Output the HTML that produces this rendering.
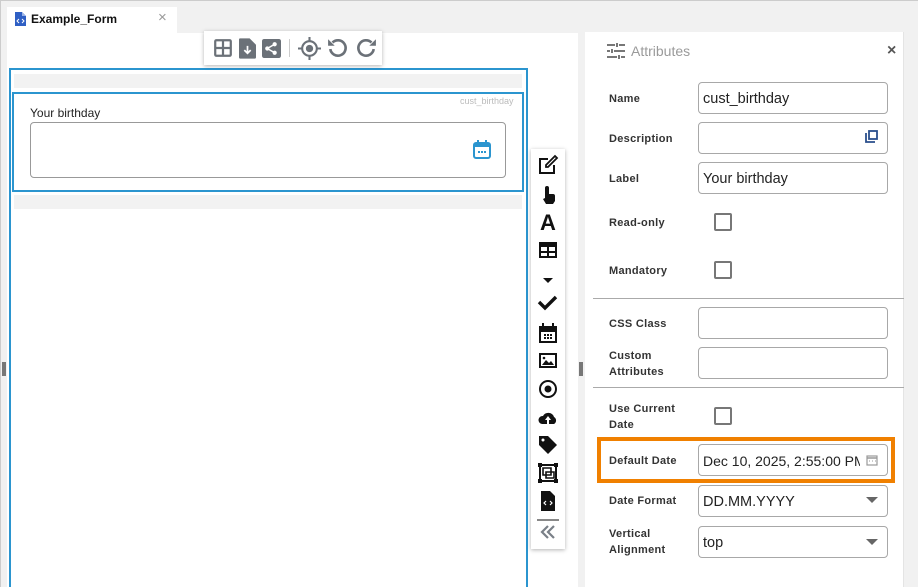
<!DOCTYPE html>
<html style="overflow:hidden;width:918px;height:587px"><head><meta charset="utf-8"><style>
*{box-sizing:border-box;margin:0;padding:0}
body{width:918px;height:587px;overflow:hidden;background:#f1f1f1;font-family:"Liberation Sans",sans-serif;position:relative;color:#222}
.a{position:absolute}
.inp{position:absolute;border:1px solid #a8a8a8;border-radius:4px;background:#fff;left:698px;width:190px;height:32px;font-size:14.5px;padding:8px 0 0 4px;color:#222;white-space:nowrap;overflow:hidden}
.lbl{position:absolute;left:609px;font-size:11px;font-weight:bold;color:#333;line-height:16px;letter-spacing:.3px}
.cb{position:absolute;left:714px;width:18px;height:18px;border:2px solid #777;border-radius:2px}
.tb svg{display:block}
</style></head><body>
<div class="a" style="left:0;top:0;width:918px;height:1px;background:#ccc"></div>
<div class="a" style="left:0;top:0;width:1px;height:587px;background:#ccc"></div>
<!-- tab -->
<div class="a" style="left:7px;top:7px;width:170px;height:27px;background:#fff"></div>
<svg class="a" style="left:15px;top:12px" width="11" height="14" viewBox="0 0 11 14"><path d="M0 0h7l4 4v10H0z" fill="#2f5fc4"/><path d="M7 0v4h4" fill="#9bb3e6"/><path d="M4 7l-2 2 2 2M7 7l2 2-2 2" stroke="#fff" stroke-width="1" fill="none"/></svg>
<div class="a" style="left:31px;top:12px;font-size:12px;font-weight:bold;color:#111">Example_Form</div>
<div class="a" style="left:158px;top:9px;font-size:15px;color:#999">×</div>
<!-- left panel -->
<div class="a" style="left:7px;top:33px;width:571px;height:554px;background:#fff"></div>
<div class="a" style="left:9px;top:68px;width:519px;height:530px;border:2px solid #2b95cf"></div>
<div class="a" style="left:14px;top:74px;width:508px;height:14px;background:#f2f2f2"></div>
<div class="a" style="left:12px;top:92px;width:512px;height:100px;border:2px solid #2b95cf"></div>
<div class="a" style="left:460px;top:96px;font-size:9px;color:#bbb">cust_birthday</div>
<div class="a" style="left:30px;top:106px;font-size:12px;color:#222">Your birthday</div>
<div class="a" style="left:30px;top:122px;width:476px;height:56px;border:1px solid #999;border-radius:4px"></div>
<svg class="a" style="left:473px;top:140px" width="18" height="19" viewBox="0 0 18 19"><rect x="1" y="3" width="16" height="15" rx="2" fill="none" stroke="#2b95cf" stroke-width="2"/><rect x="1" y="3" width="16" height="4" fill="#2b95cf"/><rect x="4" y="0" width="2" height="4" fill="#2b95cf"/><rect x="12" y="0" width="2" height="4" fill="#2b95cf"/><rect x="5" y="11" width="2" height="2" fill="#2b95cf"/><rect x="8" y="11" width="2" height="2" fill="#2b95cf"/><rect x="11" y="11" width="2" height="2" fill="#2b95cf"/></svg>
<div class="a" style="left:14px;top:195px;width:508px;height:14px;background:#f2f2f2"></div>
<div class="a" style="left:2px;top:362px;width:4px;height:14px;border-left:2px solid #777;border-right:2px solid #777"></div>
<div class="a" style="left:579px;top:362px;width:4px;height:14px;border-left:2px solid #777;border-right:2px solid #777"></div>
<!-- top toolbar -->
<div class="a tb" style="left:204px;top:31px;width:178px;height:34px;background:#fff;box-shadow:0 1px 4px rgba(0,0,0,.3);display:flex;align-items:center;padding-left:9px;gap:6px">
<svg width="20" height="20" viewBox="0 0 18 18"><rect x="1" y="1" width="16" height="16" rx="2" fill="#6b7178"/><path d="M3 3h5v5H3zM10 3h5v5h-5zM3 10h5v5H3zM10 10h5v5h-5z" fill="#fff"/></svg>
<svg width="17" height="21" viewBox="0 0 16 19"><path d="M0 1a1 1 0 0 1 1-1h9l6 6v12a1 1 0 0 1-1 1H1a1 1 0 0 1-1-1z" fill="#6b7178"/><path d="M8 7v7M5 11l3 3 3-3" stroke="#fff" stroke-width="1.6" fill="none"/></svg>
<svg width="19" height="19" viewBox="0 0 18 18"><rect x="0" y="0" width="18" height="18" rx="2" fill="#6b7178"/><circle cx="12" cy="5" r="2" fill="#fff"/><circle cx="5" cy="9" r="2" fill="#fff"/><circle cx="12" cy="13" r="2" fill="#fff"/><path d="M12 5L5 9l7 4" stroke="#fff" stroke-width="1.4" fill="none"/></svg>
<div style="width:1px;height:18px;background:#ccc;margin:0 2px"></div>
<svg width="23" height="23" viewBox="0 0 22 22"><circle cx="11" cy="11" r="7" fill="none" stroke="#6b7178" stroke-width="2"/><circle cx="11" cy="11" r="3.5" fill="#6b7178"/><path d="M11 0v4M11 18v4M0 11h4M18 11h4" stroke="#6b7178" stroke-width="2"/></svg>
<svg width="22" height="22" viewBox="0 0 20 20"><path d="M5 5a7 7 0 1 1-2 6" fill="none" stroke="#6b7178" stroke-width="2.4"/><path d="M1 2v6h6z" fill="#6b7178"/></svg>
<svg width="22" height="22" viewBox="0 0 20 20"><path d="M15 5a7 7 0 1 0 2 6" fill="none" stroke="#6b7178" stroke-width="2.4"/><path d="M19 2v6h-6z" fill="#6b7178"/></svg>
</div>
<!-- vertical toolbar -->
<div class="a" style="left:531px;top:149px;width:34px;height:400px;background:#fff;box-shadow:0 1px 4px rgba(0,0,0,.3)"></div>
<svg class="a" style="left:537px;top:154px" width="22" height="390" viewBox="0 0 22 390">
<g fill="#111">
<path d="M2 4h9v2H4v12h12v-7h2v9H2z"/><path d="M9 11l9-9 2 2-9 9H9z" fill="none" stroke="#111" stroke-width="1.8"/>
<path d="M8 34a2 2 0 0 1 4 0v6h4a2 2 0 0 1 2 2v5l-2 3H9l-3-5 2-1z"/>
<text x="11" y="76" font-size="22" font-weight="bold" text-anchor="middle" font-family="Liberation Sans">A</text>
<path d="M2 88h18v16H2z"/><path d="M4 93h6v4H4zM12 93h6v4h-6zM4 99h6v3H4zM12 99h6v3h-6z" fill="#fff"/>
<path d="M6 124h10l-5 5z"/>
<path d="M2 148l6 6 11-11" fill="none" stroke="#111" stroke-width="3.4"/>
<path d="M2 172h18v17H2z"/><path d="M4 178h14v9H4z" fill="#fff"/><rect x="5" y="169" width="2" height="4"/><rect x="15" y="169" width="2" height="4"/><path d="M7 180h2v2H7zM10 180h2v2h-2zM13 180h2v2h-2zM7 183h2v2H7zM10 183h2v2h-2zM13 183h2v2h-2z"/>
<path d="M2 199h18v15H2z"/><path d="M4 201h14v11H4z" fill="#fff"/><path d="M5 211l4-5 3 3 2-2 3 4z"/><circle cx="7" cy="204" r="1.3"/>
<circle cx="11" cy="235" r="8" fill="none" stroke="#111" stroke-width="2"/><circle cx="11" cy="235" r="3.5"/>
<path d="M5 270a4 4 0 0 1 1-8 6 6 0 0 1 11 1 4 4 0 0 1 0 7z"/><path d="M11 262l-3 4h2v4h2v-4h2z" fill="#fff"/>
<path d="M2 282h9l9 9-9 9-9-9z"/><circle cx="6" cy="286" r="1.5" fill="#fff"/>
<path d="M3 311h16v16H3z" fill="none" stroke="#111" stroke-width="2"/><path d="M6 314h8v7H6z" fill="none" stroke="#111" stroke-width="1.6"/><path d="M9 318h8v6H9z" fill="none" stroke="#111" stroke-width="1.6"/><path d="M1 309h4v4H1zM17 309h4v4h-4zM1 325h4v4H1zM17 325h4v4h-4z"/>
<path d="M4 337h9l5 5v15H4z"/><path d="M9 347l-2 2 2 2M13 347l2 2-2 2" stroke="#fff" stroke-width="1.2" fill="none"/>
<rect x="0" y="365" width="22" height="2" fill="#888"/>
<path d="M11 372l-6 6 6 6M17 372l-6 6 6 6" stroke="#7a8088" stroke-width="2.2" fill="none"/>
</g></svg>
<!-- right panel -->
<div class="a" style="left:585px;top:32px;width:319px;height:555px;background:#fff"></div>
<div class="a" style="left:903px;top:32px;width:1px;height:555px;background:#e4e4e4"></div>
<svg class="a" style="left:607px;top:43px" width="18" height="16" viewBox="0 0 18 16"><path d="M0 2h8M12 2h6M0 8h3M7 8h11M0 14h10M14 14h4M10 0v4M5 6v4M12 12v4" stroke="#777" stroke-width="2"/></svg>
<div class="a" style="left:631px;top:43px;font-size:14px;color:#9a9a9a">Attributes</div>
<div class="a" style="left:887px;top:42px;font-size:16px;font-weight:bold;color:#555">×</div>
<div class="lbl" style="top:91px">Name</div><div class="inp" style="top:82px">cust_birthday</div>
<div class="lbl" style="top:131px">Description</div><div class="inp" style="top:122px"></div>
<svg class="a" style="left:865px;top:130px" width="13" height="13" viewBox="0 0 13 13"><path d="M1 3v9h9" fill="none" stroke="#2a4f8c" stroke-width="1.8"/><rect x="4" y="1" width="8" height="8" fill="none" stroke="#2a4f8c" stroke-width="1.8"/></svg>
<div class="lbl" style="top:171px">Label</div><div class="inp" style="top:162px">Your birthday</div>
<div class="lbl" style="top:215px">Read-only</div><div class="cb" style="top:213px"></div>
<div class="lbl" style="top:263px">Mandatory</div><div class="cb" style="top:261px"></div>
<div class="a" style="left:593px;top:298px;width:311px;height:1px;background:#aaa"></div>
<div class="lbl" style="top:316px">CSS Class</div><div class="inp" style="top:307px"></div>
<div class="lbl" style="top:348px">Custom<br>Attributes</div><div class="inp" style="top:347px"></div>
<div class="a" style="left:593px;top:387px;width:311px;height:1px;background:#aaa"></div>
<div class="lbl" style="top:401px">Use Current<br>Date</div><div class="cb" style="top:407px"></div>
<div class="a" style="left:597px;top:437px;width:298px;height:46px;border:4px solid #f08000"></div>
<div class="lbl" style="top:453px">Default Date</div>
<div class="inp" style="top:444px;font-size:14px">Dec 10, 2025, 2:55:00 PM</div>
<div class="a" style="left:860px;top:445px;width:27px;height:30px;background:#fff;border-radius:0 4px 4px 0"></div>
<svg class="a" style="left:866px;top:454px" width="12" height="12" viewBox="0 0 12 12"><rect x="1" y="2" width="10" height="9" fill="none" stroke="#999" stroke-width="1.2"/><path d="M1 4h10" stroke="#999" stroke-width="1.5"/><path d="M3 7h1M6 7h1M9 7h1" stroke="#999"/></svg>
<div class="lbl" style="top:493px">Date Format</div><div class="inp" style="top:485px">DD.MM.YYYY</div>
<svg class="a" style="left:866px;top:497px" width="12" height="7"><path d="M0 0h12L6 6z" fill="#666"/></svg>
<div class="lbl" style="top:526px">Vertical<br>Alignment</div><div class="inp" style="top:526px">top</div>
<svg class="a" style="left:866px;top:539px" width="12" height="7"><path d="M0 0h12L6 6z" fill="#666"/></svg>
</body></html>
